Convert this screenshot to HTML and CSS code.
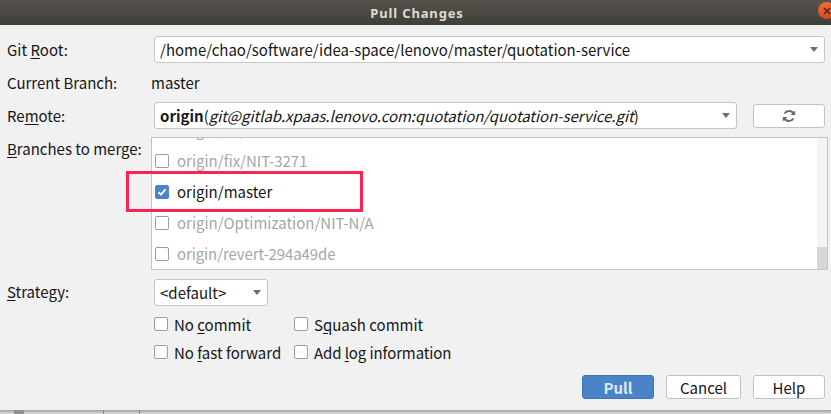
FILE: index.html
```html
<!DOCTYPE html>
<html>
<head>
    <meta charset="UTF-8">
    <title>Pull Changes</title>
    <link rel="stylesheet" href="styles.css">
</head>
<body>
    <div class="titlebar">
        <span class="title">Pull Changes</span>
        <span class="close">
            <svg width="10" height="10" viewBox="0 0 10 10"><path d="M2 2l6 6M8 2l-6 6" stroke="#3c2a20" stroke-width="1.5" fill="none"/></svg>
        </span>
    </div>
    <div class="dialog">
        <div class="form-row row-root">
            <label class="field-label">Git <u>R</u>oot:</label>
            <div class="combo combo-wide">
                <span class="combo-text">/home/chao/software/idea-space/lenovo/master/quotation-service</span>
                <span class="arrow"></span>
            </div>
        </div>
        <div class="form-row row-branch">
            <label class="field-label">Current Branch:</label>
            <span class="branch-name">master</span>
        </div>
        <div class="form-row row-remote">
            <label class="field-label">Re<u>m</u>ote:</label>
            <div class="combo combo-remote">
                <span class="combo-text"><b>origin</b>(<i>git@gitlab.xpaas.lenovo.com:quotation/quotation-service.git</i>)</span>
                <span class="arrow"></span>
            </div>
            <button class="btn btn-refresh">
                <svg width="14" height="14" viewBox="0 0 14 14" fill="none" stroke="#6a6a6a" stroke-width="2">
                    <path d="M12 5.6A5.2 5.2 0 0 0 2.6 4.4"/>
                    <path d="M2 8.4a5.2 5.2 0 0 0 9.4 1.2"/>
                    <path d="M8.6 6h4.6V1.4z" fill="#6a6a6a" stroke="none"/>
                    <path d="M5.4 8H.8v4.6z" fill="#6a6a6a" stroke="none"/>
                </svg>
            </button>
        </div>
        <div class="form-row row-branches">
            <label class="field-label"><u>B</u>ranches to merge:</label>
            <div class="branch-list">
                <div class="branch-items">
                    <div class="branch-item muted"><span class="check"></span><span>origin/fix/NIT-3269</span></div>
                    <div class="branch-item muted"><span class="check"></span><span>origin/fix/NIT-3271</span></div>
                    <div class="branch-item"><span class="check checked"><svg width="10" height="10" viewBox="0 0 10 10"><path d="M1.5 5.2l2.4 2.4 4.6-5.2" stroke="#fff" stroke-width="1.8" fill="none"/></svg></span><span>origin/master</span></div>
                    <div class="branch-item muted"><span class="check"></span><span>origin/Optimization/NIT-N/A</span></div>
                    <div class="branch-item muted"><span class="check"></span><span class="tight">origin/revert-294a49de</span></div>
                </div>
                <div class="scrollbar"><div class="thumb"></div></div>
            </div>
        </div>
        <div class="form-row row-strategy">
            <label class="field-label"><u>S</u>trategy:</label>
            <div class="combo combo-strategy">
                <span class="combo-text">&lt;default&gt;</span>
                <span class="arrow"></span>
            </div>
        </div>
        <div class="options">
            <div class="option"><span class="check"></span><span>No <u>c</u>ommit</span></div>
            <div class="option"><span class="check"></span><span>S<u>q</u>uash commit</span></div>
            <div class="option"><span class="check"></span><span>No <u>f</u>ast forward</span></div>
            <div class="option"><span class="check"></span><span class="tight">Add <u>l</u>og information</span></div>
        </div>
        <div class="buttons">
            <button class="btn btn-primary">Pull</button>
            <button class="btn btn-cancel">Cancel</button>
            <button class="btn btn-help">Help</button>
        </div>
    </div>
    <div class="behind">
        <span class="behind-tab"></span>
        <span class="behind-line"></span>
        <span class="behind-line behind-line-far"></span>
    </div>
    <div class="annotation"></div>
</body>
</html>
```

FILE: styles.css
```css
html, body {
    margin: 0;
    height: 414px;
    overflow: hidden;
}
body {
    font-family: "Noto Sans CJK SC", "Noto Sans", sans-serif;
    font-size: 15px;
    color: #161616;
    background: #f1f1f1;
    position: relative;
}
u {
    text-underline-offset: 2px;
}
.tight {
    letter-spacing: -0.1px;
}
.titlebar {
    height: 25px;
    background: linear-gradient(#56534c, #3f3e39);
    display: flex;
    align-items: center;
    justify-content: center;
    position: relative;
}
.title {
    font-family: "Noto Sans", sans-serif;
    font-weight: 700;
    font-size: 13px;
    letter-spacing: 0.85px;
    color: #dfdbd2;
    padding-left: 3px;
}
.close {
    position: absolute;
    right: -4px;
    top: 2px;
    width: 17px;
    height: 17px;
    border-radius: 50%;
    background: linear-gradient(#f0703c, #d9481a);
    display: flex;
    align-items: center;
    justify-content: center;
}
.dialog {
    height: 385px;
    padding: 0 6px 0 7px;
    display: flex;
    flex-direction: column;
}
.form-row {
    display: flex;
    align-items: center;
}
.field-label {
    width: 147px;
    flex: none;
    line-height: 20px;
}
.row-root {
    margin-top: 11px;
    height: 27px;
}
.row-branch {
    margin-top: 6px;
    height: 27px;
}
.branch-name {
    margin-left: -3px;
}
.row-remote {
    margin-top: 6px;
    height: 27px;
}
.row-branches {
    margin-top: 8px;
    align-items: flex-start;
}
.row-branches .field-label {
    margin-top: 2px;
    width: 144px;
}
.row-strategy {
    margin-top: 8px;
    height: 28px;
}
.combo {
    box-sizing: border-box;
    height: 27px;
    background: #fff;
    border: 1px solid #c6c6c6;
    border-radius: 3px;
    padding: 0 5px;
    display: flex;
    align-items: center;
    justify-content: space-between;
}
.combo-wide {
    width: 671px;
}
.combo-remote {
    width: 583px;
}
.combo-strategy {
    width: 114px;
}
.combo-text {
    white-space: nowrap;
}
.combo-text i {
    letter-spacing: -0.03px;
}
.arrow {
    width: 0;
    height: 0;
    border-left: 4.5px solid transparent;
    border-right: 4.5px solid transparent;
    border-top: 5px solid #6e6e6e;
    margin-right: 1px;
}
.btn {
    box-sizing: border-box;
    height: 24px;
    background: #fff;
    border: 1px solid #c2c2c2;
    border-radius: 3px;
    font: inherit;
    color: inherit;
    padding: 0;
    display: flex;
    align-items: center;
    justify-content: center;
}
.btn-refresh {
    width: 72px;
    margin-left: 16px;
}
.branch-list {
    box-sizing: border-box;
    flex: none;
    width: 677px;
    height: 133px;
    background: #fff;
    border: 1px solid #c4c4c4;
    display: flex;
}
.branch-items {
    flex: 1;
    overflow: hidden;
    display: flex;
    flex-direction: column;
    justify-content: flex-end;
    padding-left: 3px;
}
.branch-item {
    flex: none;
    height: 31px;
    display: flex;
    align-items: center;
}
.muted {
    color: #a6a6a6;
}
.check {
    box-sizing: border-box;
    flex: none;
    width: 14px;
    height: 14px;
    background: #fff;
    border: 1px solid #9c9c9c;
    border-radius: 2px;
    margin-right: 8px;
    display: flex;
    align-items: center;
    justify-content: center;
}
.checked {
    background: #4a84c8;
    border-color: #4a84c8;
}
.scrollbar {
    width: 10px;
    background: #f4f4f4;
    display: flex;
    align-items: flex-end;
}
.thumb {
    width: 100%;
    height: 22px;
    background: #d6d6d6;
}
.options {
    margin: 4px 0 0 147px;
    display: grid;
    grid-template-columns: 140px auto;
    justify-content: start;
    grid-auto-rows: 28px;
}
.option {
    display: flex;
    align-items: center;
    white-space: nowrap;
}
.option .check {
    margin-right: 6px;
}
.buttons {
    margin-top: 9px;
    display: flex;
    justify-content: flex-end;
    gap: 12px;
}
.btn-primary {
    width: 72px;
    background: #4a84c6;
    border-color: #3f76b6;
    color: #dfe9f5;
    font-weight: 700;
}
.btn-cancel {
    width: 75px;
}
.btn-help {
    width: 72px;
}
.behind {
    position: absolute;
    left: 0;
    right: 0;
    top: 410px;
    height: 4px;
    background: linear-gradient(#9f9f9f, #dcdcdc);
}
.behind-tab {
    position: absolute;
    left: 14px;
    top: 0;
    width: 10px;
    height: 4px;
    background: #8f8f8f;
}
.behind-line {
    position: absolute;
    left: 103px;
    top: 0;
    width: 1px;
    height: 4px;
    background: #8a8a8a;
}
.behind-line-far {
    left: 139px;
}
.annotation {
    position: absolute;
    left: 126px;
    top: 171px;
    width: 231px;
    height: 35px;
    border: 3px solid #fb2352;
}
```
